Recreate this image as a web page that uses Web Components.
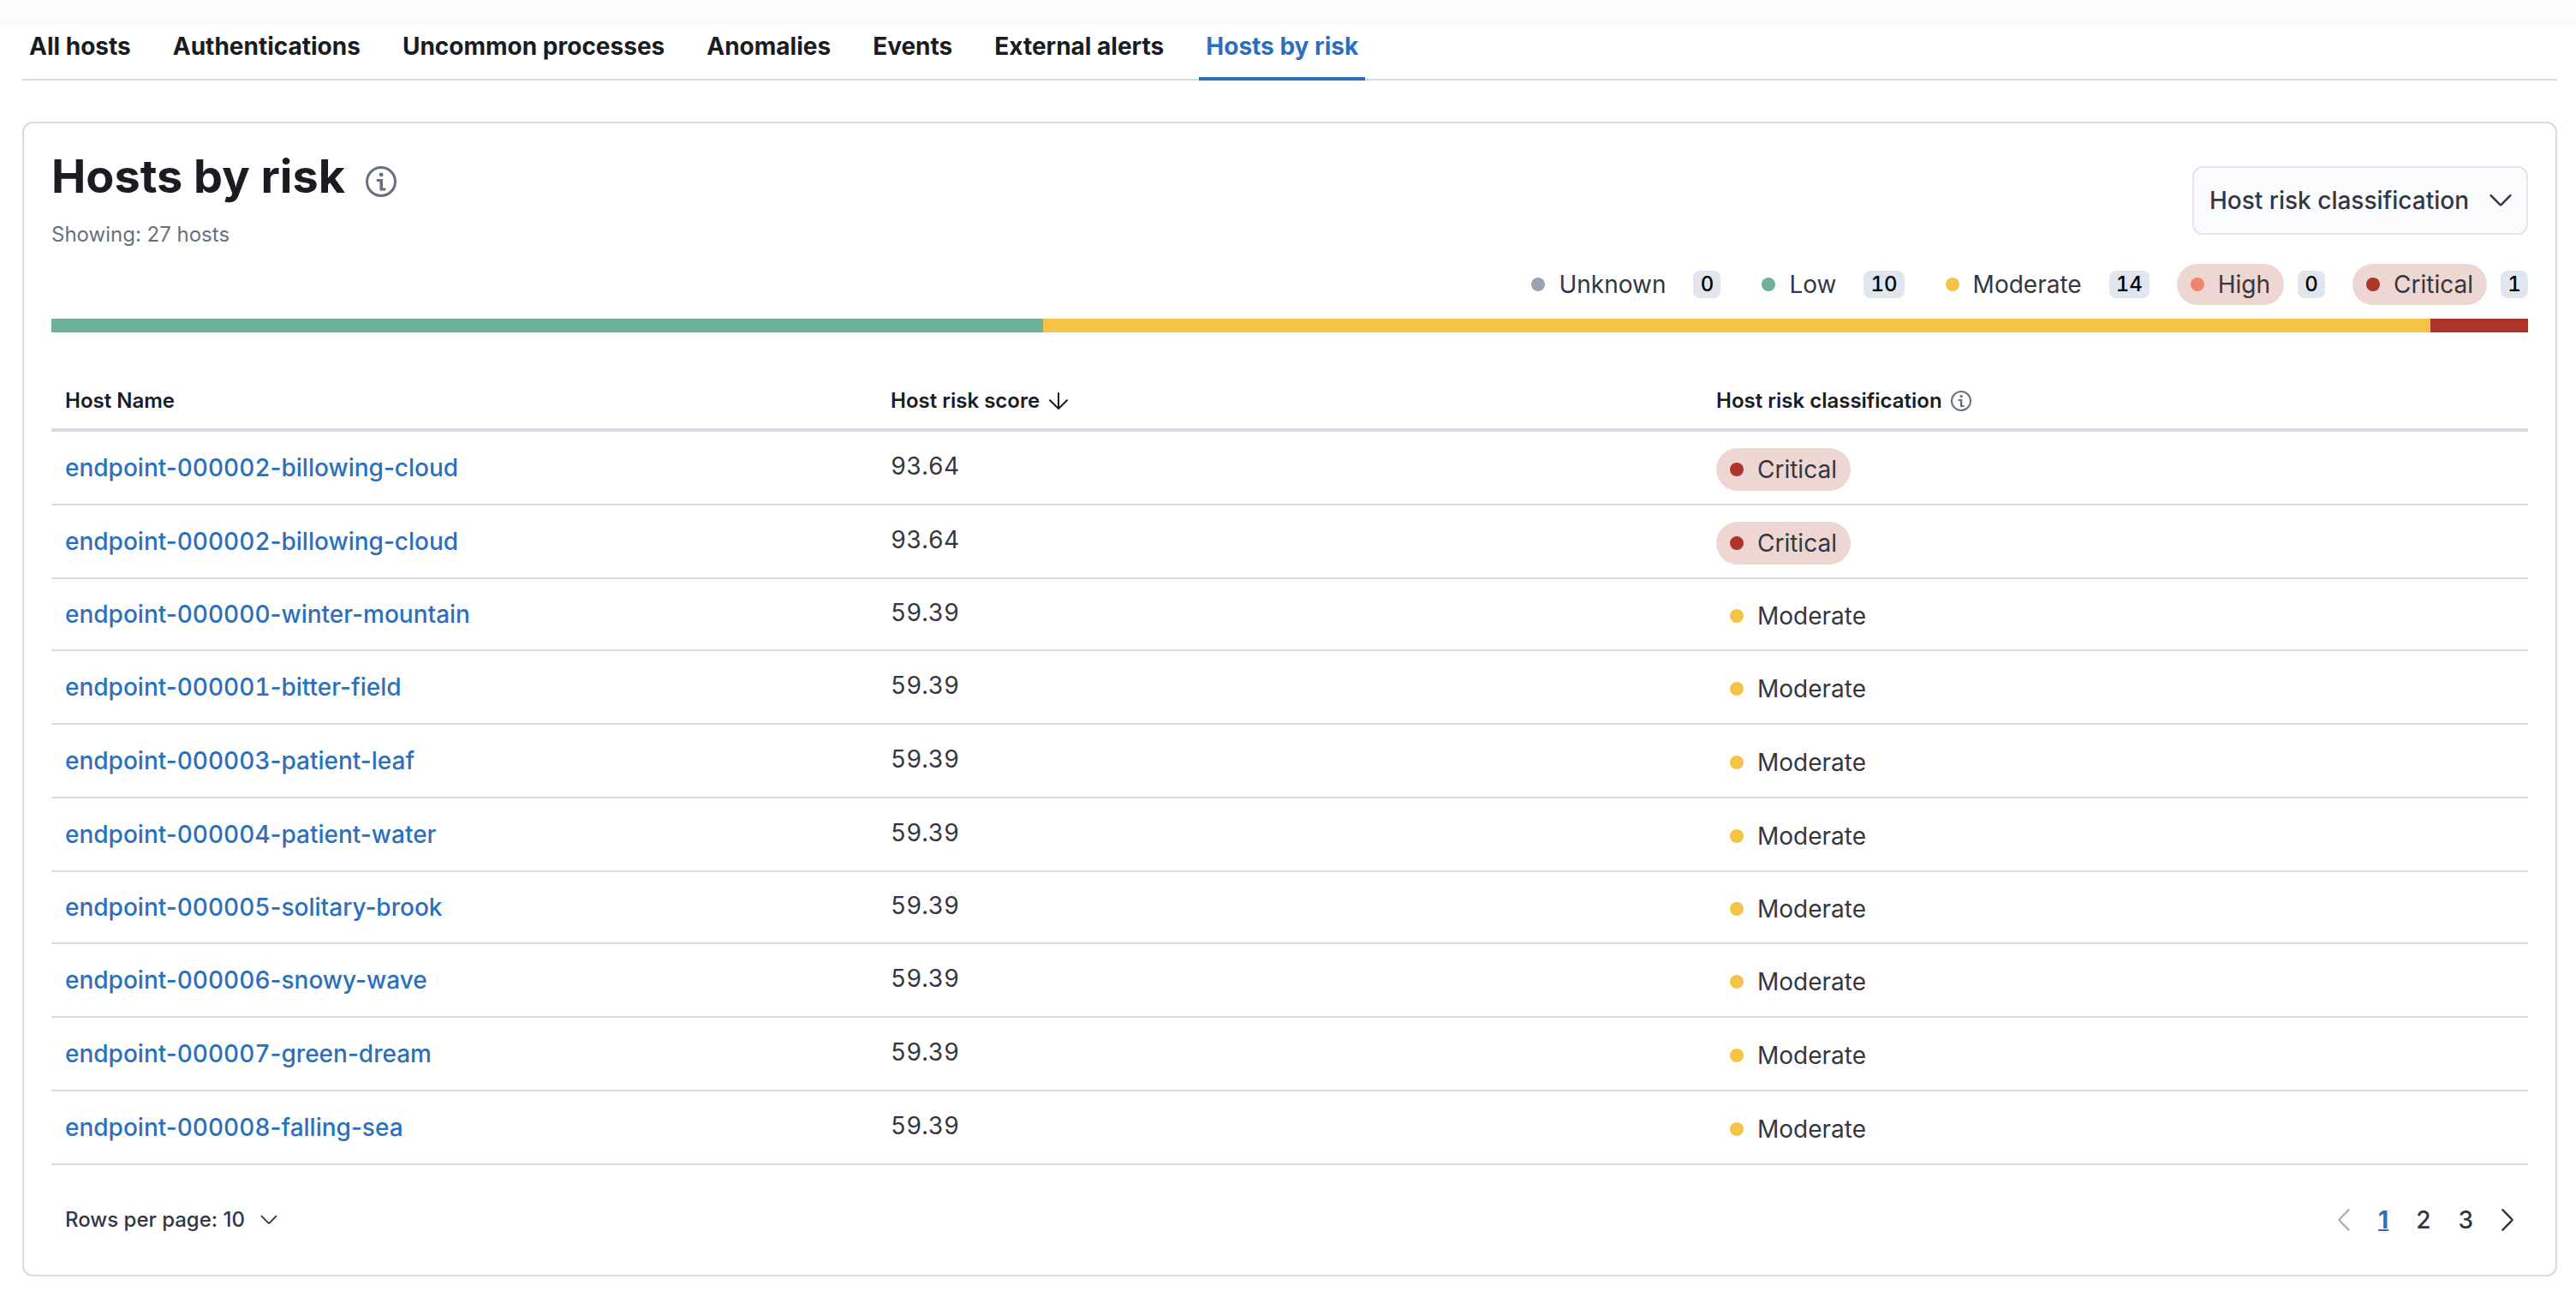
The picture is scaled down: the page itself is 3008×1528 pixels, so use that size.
<!DOCTYPE html>
<html lang="en">
<head>
<meta charset="utf-8">
<title>Hosts by risk</title>
<style>
:root {
  --text: #343741;
  --title: #1a1c21;
  --subdued: #69707d;
  --link: #2b70bd;
  --line: #d3dae6;
  --line-light: #e2e5f0;
  --shade: #fafbfd;
  --badge: #e0e5ee;
  --unknown: #9aa1b2;
  --low: #6eb09a;
  --moderate: #f5c447;
  --high: #ef856b;
  --critical: #ad3428;
  --alert-bg: #eed6d2;
}
body {
  margin: 0;
  background: #fff;
  color: var(--text);
  font: 400 28px/40px Inter, "Liberation Sans", sans-serif;
}
</style>
</head>
<body>
<hosts-page></hosts-page>

<script>
const define = (name, html, setup) => {
  const template = document.createElement('template');
  template.innerHTML = html;
  customElements.define(name, class extends HTMLElement {
    connectedCallback() {
      if (this.shadowRoot) return;
      this.attachShadow({ mode: 'open' }).append(template.content.cloneNode(true));
      if (setup) setup(this, this.shadowRoot);
    }
  });
};

const ICONS = {
  info: '<path d="M7.5 11.508 7.468 8H6.25V7h2.401l.03 3.508H9.8v1H7.5Zm-.25-6.202a.83.83 0 0 1 .207-.577c.137-.153.334-.229.59-.229s.454.076.594.23c.14.152.21.345.21.576 0 .228-.07.417-.21.568-.14.15-.338.226-.594.226s-.453-.075-.59-.226a.81.81 0 0 1-.207-.568ZM8 13A5 5 0 1 0 8 3a5 5 0 0 0 0 10Zm0 1A6 6 0 1 1 8 2a6 6 0 0 1 0 12Z"/>',
  down: '<path fill="none" stroke="currentColor" stroke-width="1.25" stroke-linecap="round" stroke-linejoin="round" d="M2.3 5.1 7.6 10.4Q8 10.8 8.4 10.4L13.7 5.1"/>',
  left: '<path fill="none" stroke="currentColor" stroke-width="1.25" stroke-linecap="round" stroke-linejoin="round" d="M10.8 2.2 5.5 7.6Q5.1 8 5.5 8.4L10.8 13.8"/>',
  right: '<path fill="none" stroke="currentColor" stroke-width="1.25" stroke-linecap="round" stroke-linejoin="round" d="M5.2 2.2 10.5 7.6Q10.9 8 10.5 8.4L5.2 13.8"/>',
  sort: '<path fill="none" stroke="currentColor" stroke-linecap="round" stroke-linejoin="round" d="M8 3.5V12.5M3 7.6 8 12.5 13 7.6"/>'
};

define('ui-icon', `
<style>
  :host { display: inline-flex; flex: none; width: 32px; height: 32px; }
  svg { width: 100%; height: 100%; fill: currentColor; }
</style>
<svg viewBox="0 0 16 16" aria-hidden="true"></svg>`,
(host, root) => { root.querySelector('svg').innerHTML = ICONS[host.getAttribute('name')]; });

define('host-tabs', `
<style>
  :host { display: block; }
  nav { display: flex; gap: 33px; box-shadow: inset 0 -2px var(--line); }
  a { padding: 4px 8px 20px; color: var(--title); font-weight: 700; text-decoration: none; }
  a[aria-current] { color: var(--link); box-shadow: inset 0 -4px var(--link); }
</style>
<nav aria-label="Host views">
  <a href="#all">All hosts</a>
  <a href="#auth">Authentications</a>
  <a href="#uncommon">Uncommon processes</a>
  <a href="#anomalies">Anomalies</a>
  <a href="#events">Events</a>
  <a href="#alerts">External alerts</a>
  <a href="#risk" aria-current="page">Hosts by risk</a>
</nav>`);

define('ui-panel', `
<style>
  :host { display: block; border: 2px solid var(--line); border-radius: 12px; padding: 32px; }
</style>
<slot></slot>`);

define('risk-level', `
<style>
  :host { display: inline-flex; align-items: center; gap: 16px; height: 48px; padding: 0 16px; border-radius: 24px; }
  :host([level="high"]), :host([level="critical"]) { background: var(--alert-bg); }
  i { flex: none; width: 16px; height: 16px; border-radius: 50%; background: var(--dot); }
</style>
<i></i><slot></slot>`,
(host, root) => { root.querySelector('i').style.setProperty('--dot', `var(--${host.getAttribute('level')})`); });

define('count-badge', `
<style>
  :host { display: inline-block; box-sizing: border-box; min-width: 32px; padding: 0 8px; border-radius: 8px;
    background: var(--badge); color: #000; font-size: 24px; font-weight: 500; line-height: 32px; text-align: center;
    font-variant-numeric: tabular-nums; }
</style>
<slot></slot>`);

define('panel-header', `
<style>
  :host { display: flex; justify-content: space-between; align-items: flex-start; }
  .title { display: flex; align-items: flex-start; gap: 18px; padding-top: 2px; }
  h2 { margin: 0; color: var(--title); font-size: 54px; font-weight: 700; line-height: 56px; }
  ui-icon { width: 48px; height: 48px; margin-top: 10px; color: var(--subdued); }
  p { margin: 20px 0 0; color: var(--subdued); font-size: 24px; line-height: 36px; }
  .filter { display: grid; align-items: center; margin-top: 18px; }
  .filter > * { grid-area: 1 / 1; }
  .filter ui-icon { width: 32px; height: 32px; margin: 0 16px 0 0; justify-self: end; color: var(--text); pointer-events: none; }
  select { appearance: none; field-sizing: content; height: 80px; padding: 0 67px 0 18px; border: 2px solid var(--line-light);
    border-radius: 12px; background: var(--shade); color: var(--text); font: inherit; font-weight: 500; }
</style>
<div>
  <div class="title"><h2>Hosts by risk</h2><ui-icon name="info"></ui-icon></div>
  <p>Showing: 27 hosts</p>
</div>
<div class="filter">
  <select aria-label="Host risk classification"><option>Host risk classification</option></select>
  <ui-icon name="down"></ui-icon>
</div>`);

define('risk-summary', `
<style>
  :host { display: block; }
  ul { display: flex; justify-content: flex-end; gap: 32px; margin: 0 0 16px; padding: 0; list-style: none; }
  li { display: flex; align-items: center; gap: 16px; }
  .bar { display: flex; height: 16px; }
  .low { flex: 1158; background: var(--low); }
  .moderate { flex: 1620; background: var(--moderate); }
  .critical { flex: 114; background: var(--critical); }
</style>
<ul>
  <li><risk-level level="unknown">Unknown</risk-level><count-badge>0</count-badge></li>
  <li><risk-level level="low">Low</risk-level><count-badge>10</count-badge></li>
  <li><risk-level level="moderate">Moderate</risk-level><count-badge>14</count-badge></li>
  <li><risk-level level="high">High</risk-level><count-badge>0</count-badge></li>
  <li><risk-level level="critical">Critical</risk-level><count-badge>1</count-badge></li>
</ul>
<div class="bar"><div class="low"></div><div class="moderate"></div><div class="critical"></div></div>`);

const HOSTS = [
  ['endpoint-000002-billowing-cloud', '93.64', 'Critical'],
  ['endpoint-000002-billowing-cloud', '93.64', 'Critical'],
  ['endpoint-000000-winter-mountain', '59.39', 'Moderate'],
  ['endpoint-000001-bitter-field', '59.39', 'Moderate'],
  ['endpoint-000003-patient-leaf', '59.39', 'Moderate'],
  ['endpoint-000004-patient-water', '59.39', 'Moderate'],
  ['endpoint-000005-solitary-brook', '59.39', 'Moderate'],
  ['endpoint-000006-snowy-wave', '59.39', 'Moderate'],
  ['endpoint-000007-green-dream', '59.39', 'Moderate'],
  ['endpoint-000008-falling-sea', '59.39', 'Moderate']
];

define('hosts-table', `
<style>
  :host { display: block; }
  table { width: 100%; border-collapse: separate; border-spacing: 0; table-layout: fixed; }
  th, td { box-sizing: border-box; padding: 0 16px; text-align: left; vertical-align: middle; }
  th { height: 76px; padding-top: 8px; border-bottom: 4px solid var(--line); color: var(--title); font-size: 24px; font-weight: 600; line-height: 32px; }
  th > span, th > button { display: flex; align-items: center; gap: 6px; }
  button { padding: 0; border: 0; background: none; color: inherit; font: inherit; }
  th:last-child ui-icon { color: var(--subdued); }
  td { height: 86px; border-bottom: 2px solid var(--line); }
  tr:nth-child(4n + 3) td { height: 84px; }
  td:nth-child(2) { padding-bottom: 4px; }
  td:nth-child(3) { padding-top: 4px; }
  td:nth-child(2), a span { font-variant-numeric: tabular-nums; }
  a { color: var(--link); font-weight: 500; text-decoration: none; }
  risk-level { display: flex; width: fit-content; height: 50px; border-radius: 25px; }
</style>
<table>
  <thead><tr>
    <th scope="col"><span>Host Name</span></th>
    <th scope="col" aria-sort="descending"><button type="button">Host risk score<ui-icon name="sort"></ui-icon></button></th>
    <th scope="col"><span>Host risk classification<ui-icon name="info"></ui-icon></span></th>
  </tr></thead>
  <tbody></tbody>
</table>`,
(host, root) => {
  root.querySelector('tbody').innerHTML = HOSTS.map(([name, score, level]) => `<tr>
    <td><a href="#${name}">${name.replace(/\d+/, '<span>$&</span>')}</a></td><td>${score}</td>
    <td><risk-level level="${level.toLowerCase()}">${level}</risk-level></td></tr>`).join('');
});

define('table-footer', `
<style>
  :host { display: flex; justify-content: space-between; align-items: center; padding-left: 16px; }
  .size { display: grid; align-items: center; }
  .size > * { grid-area: 1 / 1; }
  .size ui-icon { width: 24px; height: 24px; justify-self: end; pointer-events: none; }
  select { appearance: none; field-sizing: content; height: 48px; padding: 0 40px 0 0; border: 0; background: none;
    color: var(--text); font: inherit; font-size: 24px; font-weight: 500; }
  nav { display: flex; align-items: center; }
  button { display: flex; align-items: center; justify-content: center; width: 48px; height: 48px; padding: 0; border: 0; background: none; color: var(--text); }
  button:disabled { color: #abb4c4; }
  a { padding: 0 16px; color: var(--text); font-weight: 500; text-decoration: none; }
  a[aria-current] { color: var(--link); font-weight: 700; text-decoration: underline; text-decoration-thickness: 2px; }
</style>
<div class="size">
  <select aria-label="Rows per page"><option>Rows per page: 10</option></select>
  <ui-icon name="down"></ui-icon>
</div>
<nav aria-label="Pagination">
  <button type="button" disabled aria-label="Previous page"><ui-icon name="left"></ui-icon></button>
  <a href="#page-1" aria-current="page">1</a><a href="#page-2">2</a><a href="#page-3">3</a>
  <button type="button" aria-label="Next page"><ui-icon name="right"></ui-icon></button>
</nav>`);

define('hosts-page', `
<style>
  :host { display: block; }
  header { height: 30px; background: var(--shade); }
  main { padding: 0 22px 38px 26px; }
  ui-panel { margin-top: 48px; }
  panel-header { margin-bottom: 16px; }
  hosts-table { margin: 40px 0; }
  table-footer { margin-bottom: 8px; }
</style>
<header></header>
<main>
  <host-tabs></host-tabs>
  <ui-panel>
    <panel-header></panel-header>
    <risk-summary></risk-summary>
    <hosts-table></hosts-table>
    <table-footer></table-footer>
  </ui-panel>
</main>`);
</script>
</body>
</html>
